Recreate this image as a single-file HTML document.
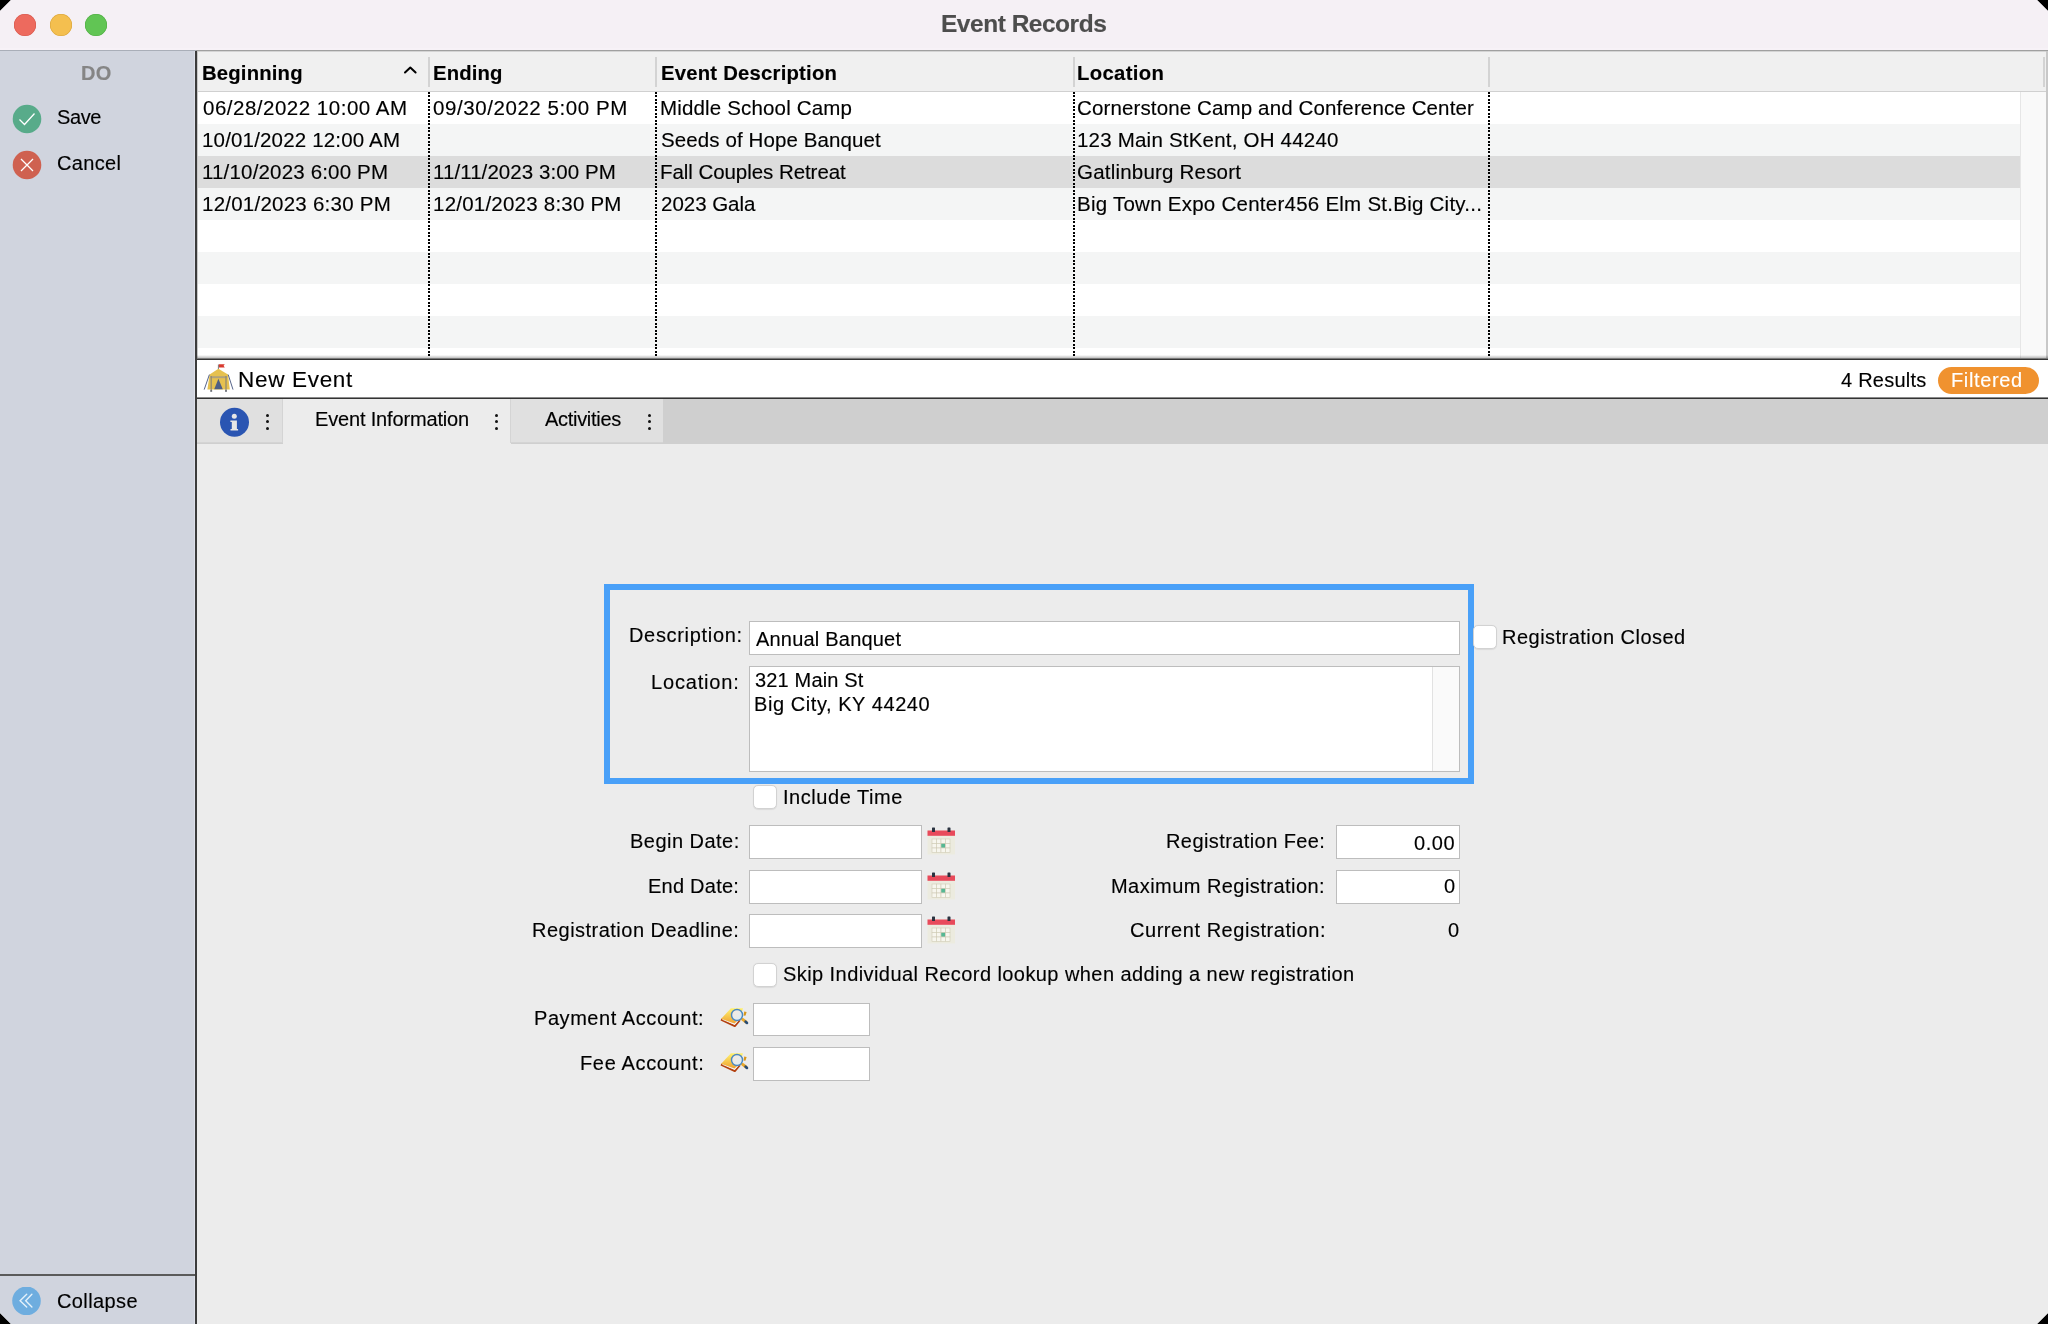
<!DOCTYPE html>
<html><head><meta charset="utf-8"><style>
html,body{margin:0;padding:0;background:#000;width:2048px;height:1324px;overflow:hidden}
#w{position:absolute;left:0;top:0;width:2048px;height:1324px;overflow:hidden;background:#ececec;
clip-path:polygon(11px 0,2037px 0,2048px 11px,2048px 1313px,2037px 1324px,11px 1324px,0 1313px,0 11px)}
.t{position:absolute;white-space:nowrap;font-family:"Liberation Sans",sans-serif;-webkit-text-stroke:0.15px currentColor;will-change:transform}
</style></head><body><div id="w">
<div style="position:absolute;left:0px;top:0px;width:2048px;height:48px;background:#f5f0f5"></div>
<div style="position:absolute;left:0px;top:48px;width:2048px;height:2px;background:#f7f2f7"></div>
<div style="position:absolute;left:0px;top:50px;width:196px;height:1px;background:#a9aeb8"></div>
<div style="position:absolute;left:196px;top:50px;width:1852px;height:1px;background:#a0a0a0"></div>
<div style="position:absolute;left:14px;top:14px;width:22px;height:22px;border-radius:50%;background:#ed6a5e;box-shadow:inset 0 0 0 0.5px #d6574c"></div>
<div style="position:absolute;left:49.6px;top:14px;width:22px;height:22px;border-radius:50%;background:#f4bf4f;box-shadow:inset 0 0 0 0.5px #d9a43a"></div>
<div style="position:absolute;left:84.8px;top:14px;width:22px;height:22px;border-radius:50%;background:#61c554;box-shadow:inset 0 0 0 0.5px #4fac42"></div>
<div style="position:absolute;left:0px;top:51px;width:194px;height:1273px;background:#d0d4de"></div>
<div style="position:absolute;left:194px;top:51px;width:1px;height:1273px;background:#dde0ea"></div>
<div style="position:absolute;left:195px;top:51px;width:2px;height:1273px;background:#3c3c3c"></div>
<div style="position:absolute;left:0px;top:1274px;width:195px;height:2px;background:#5a5a5a"></div>
<svg style="position:absolute;left:12px;top:104px" width="30" height="30" viewBox="0 0 30 30"><circle cx="15" cy="15" r="14.3" fill="#58ab8a"/><path d="M7.5 15.5 L12.5 20.5 L22.5 9.5" fill="none" stroke="#fff" stroke-width="1.3"/></svg>
<svg style="position:absolute;left:12px;top:150px" width="30" height="30" viewBox="0 0 30 30"><circle cx="15" cy="15" r="14.3" fill="#cf6150"/><path d="M9 9 L21 21 M21 9 L9 21" fill="none" stroke="#fff" stroke-width="1.3"/></svg>
<svg style="position:absolute;left:12px;top:1287px" width="30" height="30" viewBox="0 0 30 30"><circle cx="14.5" cy="13.8" r="14.3" fill="#6eaddf"/><path d="M14.7 7.3 L8.1 13.8 L14.7 20.1 M19.9 7.3 L13.7 13.8 L19.9 20.1" fill="none" stroke="#e4f1fa" stroke-width="1.4" stroke-linecap="round"/></svg>
<div style="position:absolute;left:197px;top:51px;width:1851px;height:307px;background:#fff"></div>
<div style="position:absolute;left:197px;top:51px;width:1px;height:307px;background:#c8c8c8"></div>
<div style="position:absolute;left:198px;top:51px;width:1848px;height:40px;background:#f0f0f0"></div>
<div style="position:absolute;left:198px;top:51px;width:1848px;height:1px;background:#d4d4d4"></div>
<div style="position:absolute;left:198px;top:91px;width:1848px;height:1px;background:#d0d0d0"></div>
<div style="position:absolute;left:2046px;top:51px;width:2px;height:307px;background:#c8c8c8"></div>
<div style="position:absolute;left:428px;top:57px;width:2px;height:30px;background:#d3d3d3"></div>
<div style="position:absolute;left:655px;top:57px;width:2px;height:30px;background:#d3d3d3"></div>
<div style="position:absolute;left:1073px;top:57px;width:2px;height:30px;background:#d3d3d3"></div>
<div style="position:absolute;left:1488px;top:57px;width:2px;height:30px;background:#d3d3d3"></div>
<div style="position:absolute;left:2043px;top:57px;width:2px;height:30px;background:#d3d3d3"></div>
<svg style="position:absolute;left:403px;top:65px" width="15" height="10" viewBox="0 0 15 10"><path d="M2 7.5 L7.3 2.5 L12.6 7.5" fill="none" stroke="#000" stroke-width="2" stroke-linejoin="round" stroke-linecap="round"/></svg>
<div style="position:absolute;left:198px;top:92px;width:1822px;height:32px;background:#ffffff"></div>
<div style="position:absolute;left:198px;top:124px;width:1822px;height:32px;background:#f4f5f5"></div>
<div style="position:absolute;left:198px;top:156px;width:1822px;height:32px;background:#dcdcdc"></div>
<div style="position:absolute;left:198px;top:188px;width:1822px;height:32px;background:#f4f5f5"></div>
<div style="position:absolute;left:198px;top:220px;width:1822px;height:32px;background:#ffffff"></div>
<div style="position:absolute;left:198px;top:252px;width:1822px;height:32px;background:#f4f5f5"></div>
<div style="position:absolute;left:198px;top:284px;width:1822px;height:32px;background:#ffffff"></div>
<div style="position:absolute;left:198px;top:316px;width:1822px;height:32px;background:#f4f5f5"></div>
<div style="position:absolute;left:198px;top:348px;width:1822px;height:10px;background:#ffffff"></div>
<div style="position:absolute;left:2020px;top:92px;width:26px;height:266px;background:#f9f9f9"></div>
<div style="position:absolute;left:2020px;top:92px;width:1px;height:266px;background:#e6e6e6"></div>
<div style="position:absolute;left:428px;top:92px;width:2px;height:264px;background:repeating-linear-gradient(to bottom,#000 0px,#000 1.8px,transparent 1.8px,transparent 3.5px)"></div>
<div style="position:absolute;left:655px;top:92px;width:2px;height:264px;background:repeating-linear-gradient(to bottom,#000 0px,#000 1.8px,transparent 1.8px,transparent 3.5px)"></div>
<div style="position:absolute;left:1073px;top:92px;width:2px;height:264px;background:repeating-linear-gradient(to bottom,#000 0px,#000 1.8px,transparent 1.8px,transparent 3.5px)"></div>
<div style="position:absolute;left:1488px;top:92px;width:2px;height:264px;background:repeating-linear-gradient(to bottom,#000 0px,#000 1.8px,transparent 1.8px,transparent 3.5px)"></div>
<div style="position:absolute;left:197px;top:355px;width:1851px;height:3px;background:linear-gradient(to bottom,rgba(0,0,0,0),rgba(0,0,0,0.25))"></div>
<div style="position:absolute;left:197px;top:358px;width:1851px;height:1px;background:#7a7a7a"></div>
<div style="position:absolute;left:197px;top:359px;width:1851px;height:1px;background:#333"></div>
<div style="position:absolute;left:197px;top:360px;width:1851px;height:37px;background:#fff"></div>
<div style="position:absolute;left:197px;top:397px;width:1851px;height:1px;background:#8a8a8a"></div>
<div style="position:absolute;left:197px;top:398px;width:1851px;height:1px;background:#333"></div>
<div style="position:absolute;left:1938px;top:367px;width:101px;height:27px;background:#f0922f;border-radius:13.5px"></div>
<svg style="position:absolute;left:200px;top:360px" width="36" height="36" viewBox="0 0 36 36">
<path d="M18.4 4.5 L18.4 9.2" stroke="#7a7a7a" stroke-width="1"/>
<path d="M18.9 4.3 L24.8 4.3 L23.6 5.8 L24.8 7.4 L18.9 7.4 Z" fill="#d83a2f"/>
<path d="M18.4 8.8 L9.6 14.6 L7.4 29.4 L29.8 29.4 L28 14.6 Z" fill="#e6c14f"/>
<path d="M10.4 16.2 L26.8 16.2 L26.8 18.2 L10.4 18.2 Z" fill="#b0a27c"/>
<path d="M18.4 18.8 L14.2 29.2 L22.8 29.2 Z" fill="#4f5f84"/>
<path d="M9.4 14.6 L4.2 29.6 M28.2 14.6 L33 29.6" stroke="#56648a" stroke-width="1" fill="none"/>
<path d="M11.2 16 L11.2 31.4 M26 16 L26 31.4" stroke="#938a72" stroke-width="1.3"/>
<path d="M10.2 31 L12.2 31 M25 31 L27 31" stroke="#3c4660" stroke-width="1.2"/>
</svg>
<div style="position:absolute;left:197px;top:399px;width:1851px;height:45px;background:#cfcfcf"></div>
<div style="position:absolute;left:197px;top:399px;width:86px;height:43px;background:#e0e0e0"></div>
<div style="position:absolute;left:197px;top:442px;width:86px;height:1px;background:#d4d4d4"></div>
<div style="position:absolute;left:282px;top:399px;width:1px;height:44px;background:#d4d4d4"></div>
<div style="position:absolute;left:283px;top:399px;width:228px;height:45px;background:#ececec"></div>
<div style="position:absolute;left:511px;top:399px;width:152px;height:43px;background:#e0e0e0"></div>
<div style="position:absolute;left:510px;top:399px;width:1px;height:44px;background:#d4d4d4"></div>
<div style="position:absolute;left:511px;top:442px;width:152px;height:1px;background:#d4d4d4"></div>
<svg style="position:absolute;left:219px;top:407px" width="31" height="31" viewBox="0 0 31 31"><circle cx="15.5" cy="15.2" r="14.5" fill="#2a55b2"/><circle cx="15.3" cy="9.3" r="2.5" fill="#e6e6e6"/><path d="M11.4 13.4 L17.9 13.4 L17.9 21.9 L19.1 21.9 L19.1 23.5 L11.5 23.5 L11.5 21.9 L12.8 21.9 L12.8 15 L11.4 15 Z" fill="#e6e6e6"/></svg>
<div style="position:absolute;left:266.3px;top:413.5px;width:3px;height:3px;border-radius:50%;background:#111"></div>
<div style="position:absolute;left:266.3px;top:420.2px;width:3px;height:3px;border-radius:50%;background:#111"></div>
<div style="position:absolute;left:266.3px;top:426.9px;width:3px;height:3px;border-radius:50%;background:#111"></div>
<div style="position:absolute;left:495.3px;top:413.5px;width:3px;height:3px;border-radius:50%;background:#111"></div>
<div style="position:absolute;left:495.3px;top:420.2px;width:3px;height:3px;border-radius:50%;background:#111"></div>
<div style="position:absolute;left:495.3px;top:426.9px;width:3px;height:3px;border-radius:50%;background:#111"></div>
<div style="position:absolute;left:647.5px;top:413.5px;width:3px;height:3px;border-radius:50%;background:#111"></div>
<div style="position:absolute;left:647.5px;top:420.2px;width:3px;height:3px;border-radius:50%;background:#111"></div>
<div style="position:absolute;left:647.5px;top:426.9px;width:3px;height:3px;border-radius:50%;background:#111"></div>
<div style="position:absolute;left:197px;top:444px;width:1851px;height:880px;background:#ececec"></div>
<div style="position:absolute;left:604px;top:584px;width:870px;height:200px;box-sizing:border-box;border:6px solid #49a0f8"></div>
<div style="position:absolute;left:749px;top:621px;width:711px;height:34px;box-sizing:border-box;background:#fff;border:1px solid #bdbdbd"></div>
<div style="position:absolute;left:749px;top:666px;width:711px;height:106px;box-sizing:border-box;background:#fff;border:1px solid #bdbdbd"></div>
<div style="position:absolute;left:1432px;top:667px;width:27px;height:104px;background:#fafafa;border-left:1px solid #e2e2e2;box-sizing:border-box"></div>
<div style="position:absolute;left:1473px;top:625px;width:24px;height:24px;box-sizing:border-box;background:#fff;border:1px solid #d2d2d2;border-radius:5px;box-shadow:0 0.5px 1px rgba(0,0,0,0.08)"></div>
<div style="position:absolute;left:753px;top:785px;width:24px;height:24px;box-sizing:border-box;background:#fff;border:1px solid #d2d2d2;border-radius:5px;box-shadow:0 0.5px 1px rgba(0,0,0,0.08)"></div>
<div style="position:absolute;left:753px;top:963px;width:24px;height:24px;box-sizing:border-box;background:#fff;border:1px solid #d2d2d2;border-radius:5px;box-shadow:0 0.5px 1px rgba(0,0,0,0.08)"></div>
<div style="position:absolute;left:749px;top:825px;width:173px;height:34px;box-sizing:border-box;background:#fff;border:1px solid #bdbdbd"></div>
<svg style="position:absolute;left:927px;top:826px" width="29" height="29" viewBox="0 0 29 29">
<rect x="0.5" y="4.5" width="27.5" height="24" fill="#ecebdf"/><rect x="0.5" y="4.5" width="27.5" height="5.3" fill="#e84a5b"/>
<rect x="5" y="1.5" width="3" height="4.5" rx="0.6" fill="#2b3340"/><rect x="20.5" y="1.5" width="3" height="4.5" rx="0.6" fill="#2b3340"/>
<g fill="#f7f6ee" stroke="#cfcbb5" stroke-width="0.6">
<rect x="5" y="13" width="4.5" height="4.5"/><rect x="9.5" y="13" width="4.5" height="4.5"/><rect x="14" y="13" width="4.5" height="4.5"/><rect x="18.5" y="13" width="4.5" height="4.5"/>
<rect x="5" y="17.5" width="4.5" height="4.5"/><rect x="9.5" y="17.5" width="4.5" height="4.5"/><rect x="14" y="17.5" width="4.5" height="4.5" fill="#55b894"/><rect x="18.5" y="17.5" width="4.5" height="4.5"/>
<rect x="5" y="22" width="4.5" height="4.5"/><rect x="9.5" y="22" width="4.5" height="4.5"/><rect x="14" y="22" width="4.5" height="4.5"/><rect x="18.5" y="22" width="4.5" height="4.5"/>
</g></svg>
<div style="position:absolute;left:749px;top:870px;width:173px;height:34px;box-sizing:border-box;background:#fff;border:1px solid #bdbdbd"></div>
<svg style="position:absolute;left:927px;top:871px" width="29" height="29" viewBox="0 0 29 29">
<rect x="0.5" y="4.5" width="27.5" height="24" fill="#ecebdf"/><rect x="0.5" y="4.5" width="27.5" height="5.3" fill="#e84a5b"/>
<rect x="5" y="1.5" width="3" height="4.5" rx="0.6" fill="#2b3340"/><rect x="20.5" y="1.5" width="3" height="4.5" rx="0.6" fill="#2b3340"/>
<g fill="#f7f6ee" stroke="#cfcbb5" stroke-width="0.6">
<rect x="5" y="13" width="4.5" height="4.5"/><rect x="9.5" y="13" width="4.5" height="4.5"/><rect x="14" y="13" width="4.5" height="4.5"/><rect x="18.5" y="13" width="4.5" height="4.5"/>
<rect x="5" y="17.5" width="4.5" height="4.5"/><rect x="9.5" y="17.5" width="4.5" height="4.5"/><rect x="14" y="17.5" width="4.5" height="4.5" fill="#55b894"/><rect x="18.5" y="17.5" width="4.5" height="4.5"/>
<rect x="5" y="22" width="4.5" height="4.5"/><rect x="9.5" y="22" width="4.5" height="4.5"/><rect x="14" y="22" width="4.5" height="4.5"/><rect x="18.5" y="22" width="4.5" height="4.5"/>
</g></svg>
<div style="position:absolute;left:749px;top:914px;width:173px;height:34px;box-sizing:border-box;background:#fff;border:1px solid #bdbdbd"></div>
<svg style="position:absolute;left:927px;top:915px" width="29" height="29" viewBox="0 0 29 29">
<rect x="0.5" y="4.5" width="27.5" height="24" fill="#ecebdf"/><rect x="0.5" y="4.5" width="27.5" height="5.3" fill="#e84a5b"/>
<rect x="5" y="1.5" width="3" height="4.5" rx="0.6" fill="#2b3340"/><rect x="20.5" y="1.5" width="3" height="4.5" rx="0.6" fill="#2b3340"/>
<g fill="#f7f6ee" stroke="#cfcbb5" stroke-width="0.6">
<rect x="5" y="13" width="4.5" height="4.5"/><rect x="9.5" y="13" width="4.5" height="4.5"/><rect x="14" y="13" width="4.5" height="4.5"/><rect x="18.5" y="13" width="4.5" height="4.5"/>
<rect x="5" y="17.5" width="4.5" height="4.5"/><rect x="9.5" y="17.5" width="4.5" height="4.5"/><rect x="14" y="17.5" width="4.5" height="4.5" fill="#55b894"/><rect x="18.5" y="17.5" width="4.5" height="4.5"/>
<rect x="5" y="22" width="4.5" height="4.5"/><rect x="9.5" y="22" width="4.5" height="4.5"/><rect x="14" y="22" width="4.5" height="4.5"/><rect x="18.5" y="22" width="4.5" height="4.5"/>
</g></svg>
<div style="position:absolute;left:1336px;top:825px;width:124px;height:34px;box-sizing:border-box;background:#fff;border:1px solid #bdbdbd"></div>
<div style="position:absolute;left:1336px;top:870px;width:124px;height:34px;box-sizing:border-box;background:#fff;border:1px solid #bdbdbd"></div>
<div style="position:absolute;left:753px;top:1003px;width:117px;height:33px;box-sizing:border-box;background:#fff;border:1px solid #bdbdbd"></div>
<div style="position:absolute;left:753px;top:1047px;width:117px;height:34px;box-sizing:border-box;background:#fff;border:1px solid #bdbdbd"></div>
<svg style="position:absolute;left:715px;top:1003px" width="36" height="28" viewBox="0 0 36 28">
<defs><linearGradient id="bk1003" x1="0" y1="0" x2="0" y2="1"><stop offset="0" stop-color="#fff370"/><stop offset="1" stop-color="#eea232"/></linearGradient>
<linearGradient id="ln1003" x1="0" y1="0" x2="1" y2="1"><stop offset="0" stop-color="#faeadc"/><stop offset="1" stop-color="#d8ecf6"/></linearGradient></defs>
<path d="M6 16.5 L19.8 23 L24.8 17" stroke="#b3400f" stroke-width="2" fill="none" stroke-linejoin="round"/>
<path d="M7.5 16.2 L19.6 21.4 L23.6 16.8" stroke="#f6f6f6" stroke-width="1.1" fill="none"/>
<path d="M6.2 15.8 L15.9 5.2 L28 5.2 L25 15 L19.5 20.4 Z" fill="url(#bk1003)"/>
<path d="M29.2 8.4 L31.6 9 L30.6 12.6 L28.6 12.8 Z" fill="#d8981e"/>
<path d="M27.6 16.4 L31 19" stroke="#eaa82a" stroke-width="3" stroke-linecap="round"/>
<path d="M30.6 18.7 L32 19.9" stroke="#274c78" stroke-width="2.6" stroke-linecap="round"/>
<circle cx="22" cy="12" r="5.5" fill="url(#ln1003)" stroke="#4a88c0" stroke-width="1.4"/>
</svg>
<svg style="position:absolute;left:715px;top:1047.5px" width="36" height="28" viewBox="0 0 36 28">
<defs><linearGradient id="bk1047" x1="0" y1="0" x2="0" y2="1"><stop offset="0" stop-color="#fff370"/><stop offset="1" stop-color="#eea232"/></linearGradient>
<linearGradient id="ln1047" x1="0" y1="0" x2="1" y2="1"><stop offset="0" stop-color="#faeadc"/><stop offset="1" stop-color="#d8ecf6"/></linearGradient></defs>
<path d="M6 16.5 L19.8 23 L24.8 17" stroke="#b3400f" stroke-width="2" fill="none" stroke-linejoin="round"/>
<path d="M7.5 16.2 L19.6 21.4 L23.6 16.8" stroke="#f6f6f6" stroke-width="1.1" fill="none"/>
<path d="M6.2 15.8 L15.9 5.2 L28 5.2 L25 15 L19.5 20.4 Z" fill="url(#bk1047)"/>
<path d="M29.2 8.4 L31.6 9 L30.6 12.6 L28.6 12.8 Z" fill="#d8981e"/>
<path d="M27.6 16.4 L31 19" stroke="#eaa82a" stroke-width="3" stroke-linecap="round"/>
<path d="M30.6 18.7 L32 19.9" stroke="#274c78" stroke-width="2.6" stroke-linecap="round"/>
<circle cx="22" cy="12" r="5.5" fill="url(#ln1047)" stroke="#4a88c0" stroke-width="1.4"/>
</svg>
<div class="t" style="left:940.80px;top:12.00px;font-size:24.5px;line-height:24.5px;font-weight:700;color:#4d4d4d;letter-spacing:-0.483px">Event Records</div>
<div class="t" style="left:81.45px;top:63.00px;font-size:20px;line-height:20px;font-weight:700;color:#858585;letter-spacing:0.300px">DO</div>
<div class="t" style="left:56.80px;top:107.00px;font-size:20px;line-height:20px;font-weight:400;color:#000;letter-spacing:-0.417px">Save</div>
<div class="t" style="left:56.80px;top:153.00px;font-size:20px;line-height:20px;font-weight:400;color:#000;letter-spacing:0.340px">Cancel</div>
<div class="t" style="left:56.80px;top:1291.00px;font-size:20px;line-height:20px;font-weight:400;color:#000;letter-spacing:0.386px">Collapse</div>
<div class="t" style="left:201.85px;top:63.00px;font-size:20.3px;line-height:20.3px;font-weight:700;color:#000;letter-spacing:0.175px">Beginning</div>
<div class="t" style="left:432.95px;top:63.00px;font-size:20.3px;line-height:20.3px;font-weight:700;color:#000;letter-spacing:0.120px">Ending</div>
<div class="t" style="left:660.95px;top:63.00px;font-size:20.3px;line-height:20.3px;font-weight:700;color:#000;letter-spacing:0.219px">Event Description</div>
<div class="t" style="left:1077.05px;top:63.00px;font-size:20.3px;line-height:20.3px;font-weight:700;color:#000;letter-spacing:0.343px">Location</div>
<div class="t" style="left:202.95px;top:98.00px;font-size:20.5px;line-height:20.5px;font-weight:400;color:#000;letter-spacing:0.506px">06/28/2022 10:00 AM</div>
<div class="t" style="left:433.45px;top:98.00px;font-size:20.5px;line-height:20.5px;font-weight:400;color:#000;letter-spacing:0.574px">09/30/2022 5:00 PM</div>
<div class="t" style="left:660.05px;top:98.00px;font-size:20.5px;line-height:20.5px;font-weight:400;color:#000;letter-spacing:0.165px">Middle School Camp</div>
<div class="t" style="left:1077.30px;top:98.00px;font-size:20.5px;line-height:20.5px;font-weight:400;color:#000;letter-spacing:0.131px">Cornerstone Camp and Conference Center</div>
<div class="t" style="left:201.50px;top:130.00px;font-size:20.5px;line-height:20.5px;font-weight:400;color:#000;letter-spacing:0.169px">10/01/2022 12:00 AM</div>
<div class="t" style="left:660.60px;top:130.00px;font-size:20.5px;line-height:20.5px;font-weight:400;color:#000;letter-spacing:0.105px">Seeds of Hope Banquet</div>
<div class="t" style="left:1077.10px;top:130.00px;font-size:20.5px;line-height:20.5px;font-weight:400;color:#000;letter-spacing:0.208px">123 Main StKent, OH 44240</div>
<div class="t" style="left:201.50px;top:162.00px;font-size:20.5px;line-height:20.5px;font-weight:400;color:#000;letter-spacing:0.171px">11/10/2023 6:00 PM</div>
<div class="t" style="left:432.70px;top:162.00px;font-size:20.5px;line-height:20.5px;font-weight:400;color:#000;letter-spacing:0.071px">11/11/2023 3:00 PM</div>
<div class="t" style="left:660.45px;top:162.00px;font-size:20.5px;line-height:20.5px;font-weight:400;color:#000;letter-spacing:-0.058px">Fall Couples Retreat</div>
<div class="t" style="left:1077.40px;top:162.00px;font-size:20.5px;line-height:20.5px;font-weight:400;color:#000;letter-spacing:0.206px">Gatlinburg Resort</div>
<div class="t" style="left:201.50px;top:194.00px;font-size:20.5px;line-height:20.5px;font-weight:400;color:#000;letter-spacing:0.241px">12/01/2023 6:30 PM</div>
<div class="t" style="left:432.70px;top:194.00px;font-size:20.5px;line-height:20.5px;font-weight:400;color:#000;letter-spacing:0.224px">12/01/2023 8:30 PM</div>
<div class="t" style="left:661.20px;top:194.00px;font-size:20.5px;line-height:20.5px;font-weight:400;color:#000;letter-spacing:-0.025px">2023 Gala</div>
<div class="t" style="left:1076.65px;top:194.00px;font-size:20.5px;line-height:20.5px;font-weight:400;color:#000;letter-spacing:0.251px">Big Town Expo Center456 Elm St.Big City...</div>
<div class="t" style="left:238.05px;top:369.00px;font-size:22.5px;line-height:22.5px;font-weight:400;color:#000;letter-spacing:0.688px">New Event</div>
<div class="t" style="left:1840.50px;top:370.00px;font-size:20px;line-height:20px;font-weight:400;color:#000;letter-spacing:0.231px">4 Results</div>
<div class="t" style="left:1951.30px;top:370.00px;font-size:20px;line-height:20px;font-weight:400;color:#fff;letter-spacing:0.629px">Filtered</div>
<div class="t" style="left:314.60px;top:409.00px;font-size:20px;line-height:20px;font-weight:400;color:#000;letter-spacing:-0.163px">Event Information</div>
<div class="t" style="left:544.60px;top:409.00px;font-size:20px;line-height:20px;font-weight:400;color:#000;letter-spacing:-0.294px">Activities</div>
<div class="t" style="left:628.70px;top:625.00px;font-size:20px;line-height:20px;font-weight:400;color:#000;letter-spacing:0.677px">Description:</div>
<div class="t" style="left:755.90px;top:629.00px;font-size:20px;line-height:20px;font-weight:400;color:#000;letter-spacing:0.204px">Annual Banquet</div>
<div class="t" style="left:650.80px;top:672.00px;font-size:20px;line-height:20px;font-weight:400;color:#000;letter-spacing:0.825px">Location:</div>
<div class="t" style="left:754.85px;top:670.00px;font-size:20px;line-height:20px;font-weight:400;color:#000;letter-spacing:0.160px">321 Main St</div>
<div class="t" style="left:754.10px;top:694.00px;font-size:20px;line-height:20px;font-weight:400;color:#000;letter-spacing:0.568px">Big City, KY 44240</div>
<div class="t" style="left:1501.80px;top:627.00px;font-size:20px;line-height:20px;font-weight:400;color:#000;letter-spacing:0.481px">Registration Closed</div>
<div class="t" style="left:782.65px;top:787.00px;font-size:20px;line-height:20px;font-weight:400;color:#000;letter-spacing:0.550px">Include Time</div>
<div class="t" style="left:629.70px;top:831.00px;font-size:20px;line-height:20px;font-weight:400;color:#000;letter-spacing:0.475px">Begin Date:</div>
<div class="t" style="left:648.00px;top:876.00px;font-size:20px;line-height:20px;font-weight:400;color:#000;letter-spacing:0.244px">End Date:</div>
<div class="t" style="left:532.10px;top:920.00px;font-size:20px;line-height:20px;font-weight:400;color:#000;letter-spacing:0.481px">Registration Deadline:</div>
<div class="t" style="left:783.40px;top:964.00px;font-size:20px;line-height:20px;font-weight:400;color:#000;letter-spacing:0.429px">Skip Individual Record lookup when adding a new registration</div>
<div class="t" style="left:1166.20px;top:831.00px;font-size:20px;line-height:20px;font-weight:400;color:#000;letter-spacing:0.412px">Registration Fee:</div>
<div class="t" style="left:1413.95px;top:833.00px;font-size:20px;line-height:20px;font-weight:400;color:#000;letter-spacing:0.540px">0.00</div>
<div class="t" style="left:1111.40px;top:876.00px;font-size:20px;line-height:20px;font-weight:400;color:#000;letter-spacing:0.457px">Maximum Registration:</div>
<div class="t" style="left:1444.45px;top:876.00px;font-size:20px;line-height:20px;font-weight:400;color:#000;letter-spacing:0.540px">0</div>
<div class="t" style="left:1129.60px;top:920.00px;font-size:20px;line-height:20px;font-weight:400;color:#000;letter-spacing:0.548px">Current Registration:</div>
<div class="t" style="left:1448.25px;top:920.00px;font-size:20px;line-height:20px;font-weight:400;color:#000;letter-spacing:0.540px">0</div>
<div class="t" style="left:534.30px;top:1008.00px;font-size:20px;line-height:20px;font-weight:400;color:#000;letter-spacing:0.560px">Payment Account:</div>
<div class="t" style="left:580.10px;top:1053.00px;font-size:20px;line-height:20px;font-weight:400;color:#000;letter-spacing:0.645px">Fee Account:</div>
</div></body></html>
